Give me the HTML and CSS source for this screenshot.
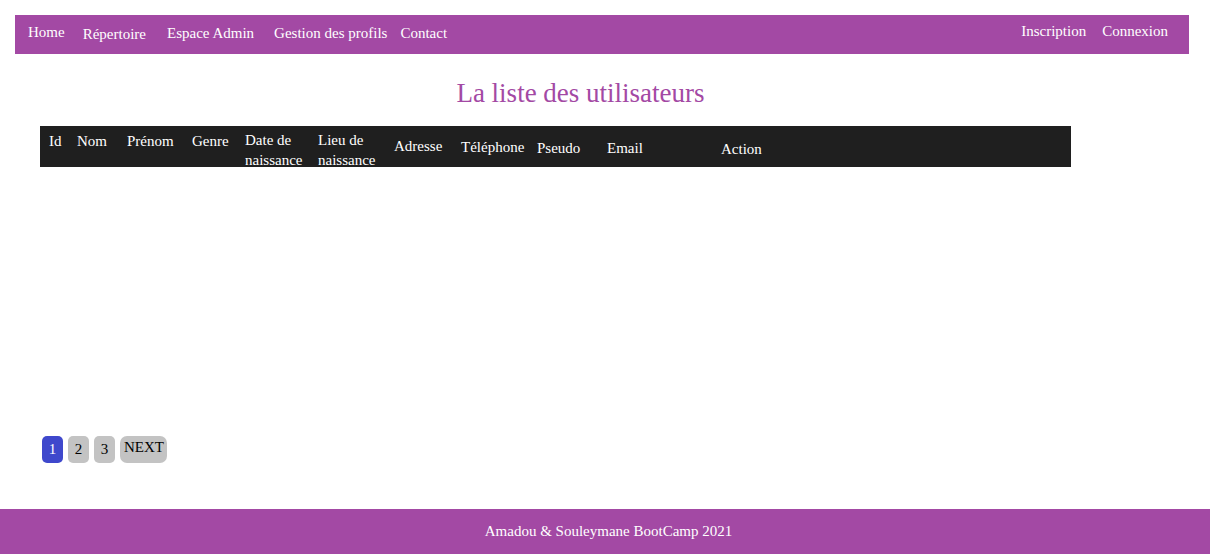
FILE: index.html
```html
<!DOCTYPE html>
<html lang="fr">
<head>
<meta charset="utf-8">
<title>La liste des utilisateurs</title>
<link rel="stylesheet" href="styles.css">
</head>
<body>
<header class="topbar">
  <nav class="nav">
    <ul class="nav-left">
      <li class="nav-home"><a href="#">Home</a></li>
      <li class="nav-rep"><a href="#">Répertoire</a></li>
      <li class="nav-admin"><a href="#">Espace Admin</a></li>
      <li class="nav-gest"><a href="#">Gestion des profils</a></li>
      <li class="nav-contact"><a href="#">Contact</a></li>
    </ul>
    <ul class="nav-right">
      <li><a href="#">Inscription</a></li>
      <li><a href="#">Connexion</a></li>
    </ul>
  </nav>
</header>

<main class="content">
  <h1 class="title">La liste des utilisateurs</h1>
  <div class="table-head">
    <div class="th th-id">Id</div>
    <div class="th th-nom">Nom</div>
    <div class="th th-prenom">Prénom</div>
    <div class="th th-genre">Genre</div>
    <div class="th th-date">Date de<br>naissance</div>
    <div class="th th-lieu">Lieu de<br>naissance</div>
    <div class="th th-adr">Adresse</div>
    <div class="th th-tel">Téléphone</div>
    <div class="th th-pseudo">Pseudo</div>
    <div class="th th-email">Email</div>
    <div class="th th-action">Action</div>
  </div>

  <div class="pagination">
    <a class="page active" href="#">1</a>
    <a class="page" href="#">2</a>
    <a class="page" href="#">3</a>
    <a class="page next" href="#">NEXT</a>
  </div>
</main>

<footer class="footer">Amadou &amp; Souleymane BootCamp 2021</footer>
</body>
</html>
```

FILE: styles.css
```css
* { box-sizing: border-box; }

html, body {
  margin: 0;
  padding: 0;
}

body {
  font-family: "Liberation Serif", "Times New Roman", serif;
  font-size: 15px;
  color: #000;
  background: #fff;
  width: 1210px;
  height: 554px;
  display: flex;
  flex-direction: column;
}

a { color: inherit; text-decoration: none; }

.topbar {
  padding: 15px 21px 0 15px;
}

.nav {
  background: #a349a4;
  height: 39px;
  display: flex;
  justify-content: space-between;
  color: #fff;
}

.nav ul {
  list-style: none;
  margin: 0;
  padding: 0;
  display: flex;
}

.nav-left { padding-left: 13px !important; }
.nav-left li { line-height: 17px; }
.nav-home { padding-top: 9px; margin-right: 18px; }
.nav-rep { padding-top: 11px; margin-right: 21px; }
.nav-admin { padding-top: 10px; margin-right: 20px; }
.nav-gest { padding-top: 10px; margin-right: 13px; }
.nav-contact { padding-top: 10px; }

.nav-right { padding-right: 21px !important; gap: 16px; }
.nav-right li { padding-top: 8px; line-height: 17px; }

.content {
  flex: 1;
  padding: 0 0 0 40px;
}

.title {
  margin: 24px 0 0 0;
  width: 1081px;
  text-align: center;
  font-weight: normal;
  font-size: 27px;
  line-height: 30px;
  color: #a349a4;
}

.table-head {
  margin-top: 18px;
  width: 1031px;
  height: 41px;
  background: #1f1f1f;
  color: #fff;
  display: grid;
  grid-template-columns: 28px 50px 65px 53px 73px 76px 67px 76px 70px 114px 1fr;
}

.th {
  padding-left: 9px;
  line-height: 20px;
  white-space: nowrap;
}

.th-id, .th-nom, .th-prenom, .th-genre { padding-top: 5px; }
.th-date, .th-lieu { padding-top: 4px; }
.th-adr { padding-top: 10px; }
.th-tel { padding-top: 11px; }
.th-pseudo { padding-top: 12px; }
.th-email { padding-top: 12px; }
.th-action { padding-top: 13px; }

.pagination {
  margin-top: 269px;
  padding-left: 2px;
  display: flex;
  gap: 5px;
  align-items: flex-start;
}

.page {
  height: 27px;
  min-width: 21px;
  padding: 5px 6px 0;
  line-height: 17px;
  background: #c3c3c3;
  border-radius: 5px;
  color: #000;
  text-align: center;
}

.page.active {
  background: #3f48cc;
  color: #fff;
  width: 21px;
}

.page.next {
  width: 47px;
  padding: 3px 4px 0;
  border-radius: 7px;
}

.footer {
  height: 45px;
  background: #a349a4;
  color: #fff;
  text-align: center;
  padding: 14px 0 0 7px;
  line-height: 17px;
}
```
